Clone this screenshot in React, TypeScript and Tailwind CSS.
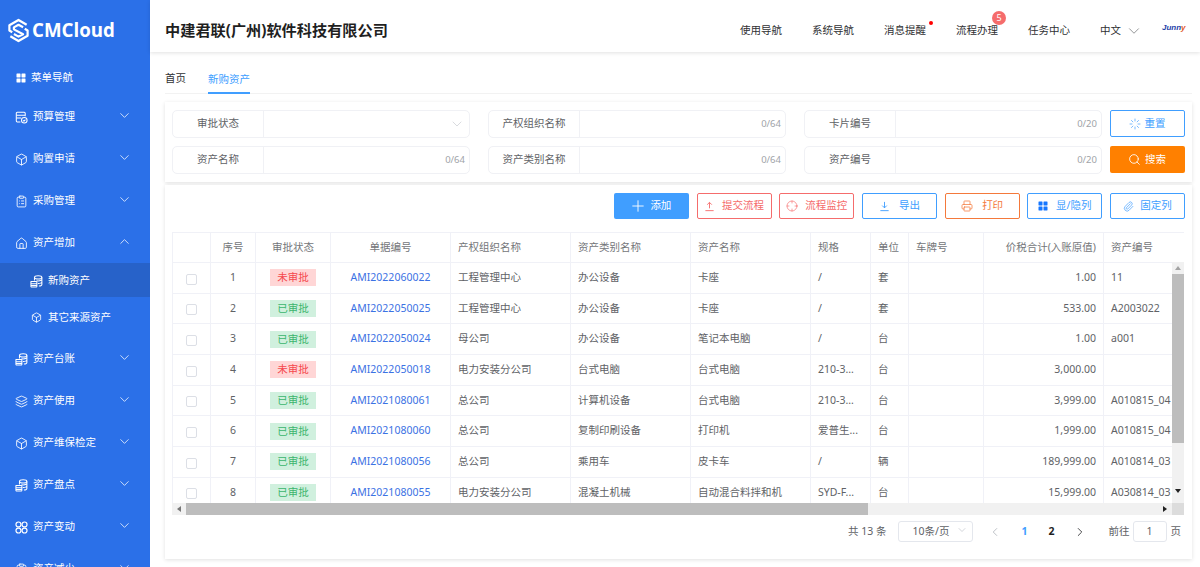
import React from 'react';
import {
  Box,
  ChevronDown,
  ChevronLeft,
  ChevronRight,
  ChevronUp,
  ClipboardList,
  Crosshair,
  House,
  Layers,
  Loader,
  Paperclip,
  Plus,
  Printer,
  Search,
} from 'lucide-react';

const FONT = { fontFamily: '"Noto Sans", "Noto Sans CJK SC", sans-serif' };

const GridIcon = ({ className }: { className?: string }) => (
  <svg viewBox="0 0 10 10" className={className} fill="currentColor">
    <rect x="0.5" y="0.5" width="4" height="4" rx="0.4" />
    <rect x="5.5" y="0.5" width="4" height="4" rx="0.4" />
    <rect x="0.5" y="5.5" width="4" height="4" rx="0.4" />
    <rect x="5.5" y="5.5" width="4" height="4" rx="0.4" />
  </svg>
);

const CirclesIcon = ({ className }: { className?: string }) => (
  <svg viewBox="0 0 12 12" className={className} fill="none" stroke="currentColor" strokeWidth="1.1">
    <circle cx="3.2" cy="3.2" r="2.3" />
    <circle cx="8.8" cy="3.2" r="2.3" />
    <circle cx="3.2" cy="8.8" r="2.3" />
    <circle cx="8.8" cy="8.8" r="2.3" />
  </svg>
);

// stacked disks with a sheet in front of them
const StackIcon = ({ className }: { className?: string }) => (
  <svg viewBox="0 0 14 14" className={className} fill="none" stroke="currentColor" strokeWidth="1.1" strokeLinejoin="round">
    <ellipse cx="8.8" cy="2.6" rx="4" ry="1.7" />
    <path d="M4.8 2.6v3.2M12.8 2.6v7.6c0 .9-1.4 1.6-3.2 1.7M7 6.2c.6.2 1.2.2 1.8.2 2.2 0 4-.8 4-1.7M8.4 9.2c2.4.1 4.4-.7 4.4-1.7" />
    <path d="M1 7h5.6a.8.8 0 0 1 .8.8v4.4a.8.8 0 0 1-.8.8H1.8a.8.8 0 0 1-.8-.8V7zM1 9.4h6.4M1 11.2h6.4" />
  </svg>
);

const BudgetIcon = ({ className }: { className?: string }) => (
  <svg viewBox="0 0 14 14" className={className} fill="none" stroke="currentColor" strokeWidth="1.1" strokeLinejoin="round">
    <path d="M11 5.6V2.4a1 1 0 0 0-1-1H2.4a1 1 0 0 0-1 1v8.4a1 1 0 0 0 1 1h3.4" />
    <path d="M1.6 4.6h9.2M1.6 7.6h5" />
    <circle cx="10" cy="10" r="3" />
    <path d="m8.7 10 1 1 1.5-1.7" />
  </svg>
);

const LineArrow = ({ className, up }: { className?: string; up?: boolean }) => (
  <svg viewBox="0 0 12 12" className={className} fill="none" stroke="currentColor" strokeWidth="1">
    {up ? <path d="M6 8V1.5M3.5 4L6 1.5 8.5 4M1.5 10.5h9" /> : <path d="M6 1v6.5M3.5 5L6 7.5 8.5 5M1.5 10.5h9" />}
  </svg>
);

const LogoMark = () => (
  <svg viewBox="0 0 24 26" className="w-[23px] h-[25px] shrink-0" fill="none" stroke="white" strokeWidth="2.3" strokeLinejoin="round">
    <path d="M20.5 7 12 2 2.5 7.5V13l3 1.8" />
    <path d="M3.5 19 12 24l9.5-5.5V13l-3-1.8" />
    <path d="M16.8 9.6 12 7 7.2 9.7v2.1l9.6 5.2L12 19.4l-4.8-2.7" />
  </svg>
);

const menu = [
  { label: '预算管理', icon: BudgetIcon },
  { label: '购置申请', icon: Box },
  { label: '采购管理', icon: ClipboardList },
];
const menuAfter = [
  { label: '资产台账', icon: StackIcon },
  { label: '资产使用', icon: Layers },
  { label: '资产维保检定', icon: Box },
  { label: '资产盘点', icon: StackIcon },
  { label: '资产变动', icon: CirclesIcon },
  { label: '资产减少', icon: ClipboardList },
];

const MenuItem = ({ label, icon: Icon, open, nudge }: { label: string; icon: React.ElementType; open?: boolean; nudge?: boolean }) => (
  <div className={`h-[42px] shrink-0 flex items-center pl-[15px] pr-[18px] text-white text-[10.5px] ${nudge ? 'pt-[2px]' : ''}`}>
    <Icon className="w-[13px] h-[13px] mr-[5px] shrink-0" strokeWidth={1.6} />
    <span className="flex-1">{label}</span>
    {open ? (
      <ChevronUp className="w-[15px] h-[15px] -mt-[4px]" strokeWidth={1.2} />
    ) : (
      <ChevronDown className="w-[15px] h-[15px] -mt-[4px]" strokeWidth={1.2} />
    )}
  </div>
);

const Sidebar = () => (
  <aside className="w-[150px] shrink-0 h-full overflow-hidden bg-[#2b70e8] flex flex-col">
    <div className="h-[61px] shrink-0 flex items-center pl-[7px] gap-[2px] text-white">
      <LogoMark />
      <span className="text-[18.7px] font-bold" style={{ fontFamily: '"Open Sans", sans-serif' }}>CMCloud</span>
    </div>
    <div className="h-[34px] shrink-0 flex items-center pl-[16px] text-white text-[10.5px]">
      <GridIcon className="w-[10px] h-[10px] mr-[5px]" />
      菜单导航
    </div>
    {menu.map((m) => (
      <MenuItem key={m.label} label={m.label} icon={m.icon} nudge />
    ))}
    <MenuItem label="资产增加" icon={House} open nudge />
    <div className="h-[34px] shrink-0 flex items-center pl-[30px] pt-[2px] bg-[#2762c9] text-white text-[10.5px]">
      <StackIcon className="w-[13px] h-[13px] mr-[5px]" />
      新购资产
    </div>
    <div className="h-[41px] shrink-0 flex items-center pl-[31px] text-white text-[10.5px]">
      <Box className="w-[11px] h-[11px] mr-[6px]" strokeWidth={1.8} />
      其它来源资产
    </div>
    {menuAfter.map((m) => (
      <MenuItem key={m.label} label={m.label} icon={m.icon} />
    ))}
  </aside>
);

const Header = () => (
  <header className="h-[52px] shrink-0 bg-white flex items-center pl-[15px] pr-[15px] pt-[9px] shadow-[0_1px_4px_rgba(0,0,0,0.12)] relative">
    <h1 className="flex-1 text-[15.2px] font-bold text-[#1f1f1f]">中建君联(广州)软件科技有限公司</h1>
    <nav className="flex items-center text-[10.5px] text-[#303133] gap-[30px]">
      <span>使用导航</span>
      <span>系统导航</span>
      <span className="relative">
        消息提醒
        <i className="absolute -right-[7px] -top-[2px] w-[4px] h-[4px] rounded-full bg-[#f00]" />
      </span>
      <span className="relative">
        流程办理
        <i className="absolute left-[36px] -top-[12px] w-[14px] h-[14px] rounded-full bg-[#f56c6c] text-white text-[9px] not-italic flex items-center justify-center">5</i>
      </span>
      <span>任务中心</span>
      <span className="flex items-center gap-[4px]">
        中文
        <ChevronDown className="w-[18px] h-[18px] text-[#606266]" strokeWidth={0.9} />
      </span>
    </nav>
    <span className="ml-[19px] -mt-[5px] w-[23px] text-[8px] leading-none font-bold italic text-[#1d3fa8]" style={{ fontFamily: '"Liberation Sans", sans-serif' }}>
      Junn<b className="text-[#e2552b]">y</b>
    </span>
  </header>
);

const Tabs = () => (
  <div className="ml-[15px] mr-[8px] h-[42px] shrink-0 flex items-end border-b border-[#f2f2f2] text-[10.5px]">
    <span className="text-[#303133] h-[22px] mr-[22px]">首页</span>
    <span className="text-[#409eff] h-[22px] border-b-2 border-[#409eff] -mb-[1px]">新购资产</span>
  </div>
);

const Field = ({ label, count, select }: { label: string; count?: string; select?: boolean }) => (
  <div className="h-[28px] w-[298px] flex border border-[#f0f1f5] rounded-[5px] text-[10.5px] text-[#606266]">
    <span className="w-[91px] shrink-0 flex items-center justify-center border-r border-[#f0f1f5]">{label}</span>
    <span className="flex-1 flex items-center justify-end pr-[4px] text-[9.5px] text-[#a0a3a8]">
      {select ? <ChevronDown className="w-[16px] h-[16px] text-[#c6c9cf]" strokeWidth={1} /> : count}
    </span>
  </div>
);

const Filters = () => (
  <section className="ml-[15px] mr-[8px] mt-[8px] h-[80px] shrink-0 bg-white shadow-[0_1px_4px_rgba(0,0,0,0.12)] pl-[7px] pr-[7px] pt-[8px] flex gap-[8px]">
    <div className="grid grid-cols-[298px_298px_298px] gap-x-[18px] gap-y-[8px] content-start">
      <Field label="审批状态" select />
      <Field label="产权组织名称" count="0/64" />
      <Field label="卡片编号" count="0/20" />
      <Field label="资产名称" count="0/64" />
      <Field label="资产类别名称" count="0/64" />
      <Field label="资产编号" count="0/20" />
    </div>
    <div className="flex flex-col gap-[9px] w-[75px] shrink-0 text-[10.5px]">
      <button className="h-[27px] border border-[#409eff] rounded-[2px] text-[#409eff] flex items-center justify-center gap-[4px] pr-[1px]">
        <Loader className="w-[12px] h-[12px]" strokeWidth={1.4} />
        重置
      </button>
      <button className="h-[27px] bg-[#ff8000] rounded-[2px] text-white flex items-center justify-center gap-[4px] pr-[1px]">
        <Search className="w-[13px] h-[13px]" strokeWidth={1.6} />
        搜索
      </button>
    </div>
  </section>
);

const toolButtons = [
  { label: '提交流程', cls: 'border-[#f56c6c] text-[#f56c6c]', icon: <LineArrow up className="w-[11px] h-[11px]" />, gap: 'gap-[7px]' },
  { label: '流程监控', cls: 'border-[#f56c6c] text-[#f56c6c]', icon: <Crosshair className="w-[12px] h-[12px]" strokeWidth={1.3} />, gap: 'gap-[7px]' },
  { label: '导出', cls: 'border-[#409eff] text-[#409eff]', icon: <LineArrow className="w-[11px] h-[11px]" />, gap: 'gap-[9px]' },
  { label: '打印', cls: 'border-[#f4793b] text-[#f4793b]', icon: <Printer className="w-[12px] h-[12px]" strokeWidth={1.5} />, gap: 'gap-[9px]' },
  { label: '显/隐列', cls: 'border-[#409eff] text-[#409eff]', icon: <GridIcon className="w-[10px] h-[10px] text-[#1677ff]" />, gap: 'gap-[8px]' },
  { label: '固定列', cls: 'border-[#409eff] text-[#409eff]', icon: <Paperclip className="w-[11px] h-[11px]" strokeWidth={1.5} />, gap: 'gap-[6px]' },
];

const Toolbar = () => (
  <div className="h-[26px] flex justify-end gap-[7.7px] text-[10.5px]">
    <button className="w-[75px] bg-[#409eff] rounded-[2px] text-white flex items-center justify-center gap-[3px] pr-[2px]">
      <Plus className="w-[18px] h-[18px]" strokeWidth={1.2} />
      添加
    </button>
    {toolButtons.map((b) => (
      <button key={b.label} className={`w-[75px] border rounded-[2px] flex items-center justify-center ${b.gap} ${b.cls}`}>
        {b.icon}
        {b.label}
      </button>
    ))}
  </div>
);

const COLS = [38, 45, 75, 120, 120, 120, 120, 60, 38, 75, 120, 89];

const rows = [
  ['1', '未审批', 'AMI2022060022', '工程管理中心', '办公设备', '卡座', '/', '套', '', '1.00', '11'],
  ['2', '已审批', 'AMI2022050025', '工程管理中心', '办公设备', '卡座', '/', '套', '', '533.00', 'A2003022'],
  ['3', '已审批', 'AMI2022050024', '母公司', '办公设备', '笔记本电脑', '/', '台', '', '1.00', 'a001'],
  ['4', '未审批', 'AMI2022050018', '电力安装分公司', '台式电脑', '台式电脑', '210-3...', '台', '', '3,000.00', ''],
  ['5', '已审批', 'AMI2021080061', '总公司', '计算机设备', '台式电脑', '210-3...', '台', '', '3,999.00', 'A010815_04'],
  ['6', '已审批', 'AMI2021080060', '总公司', '复制印刷设备', '打印机', '爱普生...', '台', '', '1,999.00', 'A010815_04'],
  ['7', '已审批', 'AMI2021080056', '总公司', '乘用车', '皮卡车', '/', '辆', '', '189,999.00', 'A010814_03'],
  ['8', '已审批', 'AMI2021080055', '电力安装分公司', '混凝土机械', '自动混合料拌和机', 'SYD-F...', '台', '', '15,999.00', 'A030814_03'],
];

const heads = ['', '序号', '审批状态', '单据编号', '产权组织名称', '资产类别名称', '资产名称', '规格', '单位', '车牌号', '价税合计(入账原值)', '资产编号'];

const Colgroup = () => (
  <colgroup>
    {COLS.map((w, i) => (
      <col key={i} style={{ width: w }} />
    ))}
  </colgroup>
);

const DataTable = () => (
  <div className="mt-[13px] w-[1012px] text-[10.5px] text-[#606266]">
    <div className="overflow-hidden h-[30px]">
      <table className="table-fixed border-collapse w-[1020px]">
        <Colgroup />
        <thead>
          <tr className="h-[30px]">
            {heads.map((h, i) => (
              <th
                key={i}
                className={`border border-[#f0f1f7] font-normal text-[#747679] px-[7px] ${i < 4 ? 'text-center' : i === 10 ? 'text-right' : 'text-left'}`}
              >
                {h}
              </th>
            ))}
          </tr>
        </thead>
      </table>
    </div>
    <div className="flex h-[241px]">
      <div className="w-[1000px] overflow-hidden">
        <table className="table-fixed border-collapse w-[1020px]">
          <Colgroup />
          <tbody>
            {rows.map((r) => (
              <tr key={r[0]} className="h-[30.7px]">
                <td className="border border-[#f0f1f7] text-center">
                  <span className="inline-block align-middle mt-[2px] w-[11px] h-[11px] border border-[#dcdfe6] rounded-[2px]" />
                </td>
                <td className="border border-[#f0f1f7] text-center">{r[0]}</td>
                <td className="border border-[#f0f1f7] text-center">
                  <span className={`inline-block w-[46px] h-[17px] leading-[17px] ${r[1] === '未审批' ? 'bg-[#ffd6d6] text-[#f5484d]' : 'bg-[#d0f0de] text-[#3bb56d]'}`}>
                    {r[1]}
                  </span>
                </td>
                <td className="border border-[#f0f1f7] text-center text-[#3b72e4]">{r[2]}</td>
                {r.slice(3, 9).map((c, i) => (
                  <td key={i} className="border border-[#f0f1f7] px-[7px] whitespace-nowrap overflow-hidden">
                    {c}
                  </td>
                ))}
                <td className="border border-[#f0f1f7] px-[7px] text-right">{r[9]}</td>
                <td className="border border-[#f0f1f7] px-[7px] whitespace-nowrap overflow-hidden">{r[10]}</td>
              </tr>
            ))}
          </tbody>
        </table>
      </div>
      {/* vertical scrollbar */}
      <div className="w-[12px] bg-[#f1f1f1] flex flex-col items-center">
        <span className="h-[12px] shrink-0 text-[#a3a3a3] flex items-center justify-center">
          <i className="block border-x-[3px] border-x-transparent border-b-[4px] border-b-current" />
        </span>
        <div className="w-full h-[169px] bg-[#bdbdbd]" />
        <span className="mt-auto h-[16px] shrink-0 text-[#222] flex items-start pt-[2px] justify-center">
          <i className="block border-x-[3px] border-x-transparent border-t-[4px] border-t-current" />
        </span>
      </div>
    </div>
    {/* horizontal scrollbar */}
    <div className="flex h-[12px]">
      <div className="flex-1 bg-[#f1f1f1] flex items-center">
        <span className="w-[14px] shrink-0 text-[#777] flex items-center justify-center">
          <i className="block border-y-[3px] border-y-transparent border-r-[4px] border-r-current" />
        </span>
        <div className="w-[682px] h-full bg-[#bdbdbd]" />
        <span className="ml-auto w-[14px] shrink-0 text-[#222] flex items-center justify-center">
          <i className="block border-y-[3px] border-y-transparent border-l-[4px] border-l-current" />
        </span>
      </div>
      <div className="w-[12px] bg-[#dcdcdc]" />
    </div>
  </div>
);

const Pagination = () => (
  <div className="mt-[6px] h-[21px] flex items-center justify-end text-[10.5px] text-[#606266] pr-[4px]">
    <span>共 13 条</span>
    <span className="ml-[11px] w-[75px] h-[21px] border border-[#e4e7ed] rounded-[3px] flex items-center justify-between pl-[14px] pr-[4px]">
      10条/页
      <ChevronDown className="w-[12px] h-[12px] text-[#c0c4cc] -mt-[3px]" strokeWidth={1.4} />
    </span>
    <ChevronLeft className="ml-[15.5px] w-[14px] h-[14px] text-[#b4b8bf]" strokeWidth={1.5} />
    <b className="ml-[18.5px] text-[#409eff] w-[8px] text-center">1</b>
    <b className="ml-[19px] text-[#1f1f1f] w-[8px] text-center">2</b>
    <ChevronRight className="ml-[17.5px] w-[14px] h-[14px] text-[#303133]" strokeWidth={1.5} />
    <span className="ml-[21.5px]">前往</span>
    <span className="ml-[3px] w-[34px] h-[21px] border border-[#e4e7ed] rounded-[3px] flex items-center justify-center">1</span>
    <span className="ml-[4px]">页</span>
  </div>
);

export default function App() {
  return (
    <div className="w-[1200px] h-[567px] overflow-hidden flex bg-white" style={FONT}>
      <Sidebar />
      <main className="flex-1 min-w-0 flex flex-col">
        <Header />
        <Tabs />
        <Filters />
        <section className="ml-[15px] mr-[8px] mt-[3px] h-[374px] shrink-0 bg-white shadow-[0_1px_4px_rgba(0,0,0,0.12)] pl-[7px] pr-[7px] pt-[8px]">
          <Toolbar />
          <DataTable />
          <Pagination />
        </section>
      </main>
    </div>
  );
}
